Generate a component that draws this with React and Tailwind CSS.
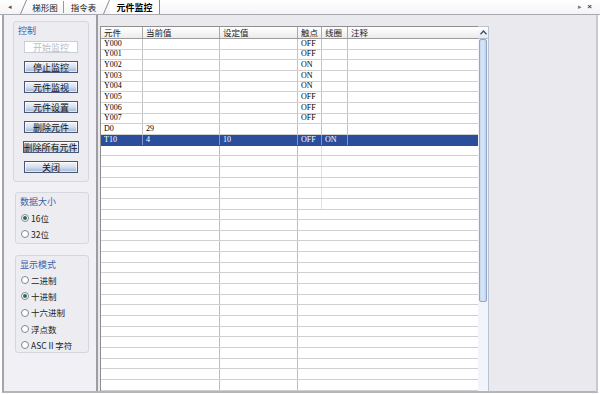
import React from "react";

const FONT = { fontFamily: '"Liberation Serif", "Noto Sans CJK SC", serif' };
const CJK = { fontFamily: '"Noto Sans CJK SC", "Liberation Sans", sans-serif' };

const cols = [
  { w: 42, label: "元件" },
  { w: 77, label: "当前值" },
  { w: 78, label: "设定值" },
  { w: 24, label: "触点" },
  { w: 26, label: "线圈" },
  { w: 130, label: "注释" },
];

const data = [
  ["Y000", "", "", "OFF", "", ""],
  ["Y001", "", "", "OFF", "", ""],
  ["Y002", "", "", "ON", "", ""],
  ["Y003", "", "", "ON", "", ""],
  ["Y004", "", "", "ON", "", ""],
  ["Y005", "", "", "OFF", "", ""],
  ["Y006", "", "", "OFF", "", ""],
  ["Y007", "", "", "OFF", "", ""],
  ["D0", "29", "", "", "", ""],
  ["T10", "4", "10", "OFF", "ON", ""],
];

function Btn({ children, disabled, wide }) {
  return (
    <div
      className={
        "flex items-center justify-center h-[12px] text-[9px] leading-none " +
        (wide ? "w-[56px] -ml-[1px] " : "w-[54px] ") +
        (disabled
          ? "bg-white border border-[#c9cdd6] text-[#b8bcc6]"
          : "bg-gradient-to-b from-[#f3f6fb] via-[#d5dfee] to-[#9fb3d2] border border-[#4a5877] text-[#111] shadow-[inset_0_0_0_1px_#ffffffaa]")
      }
      style={CJK}
    >
      {children}
    </div>
  );
}

function Radio({ checked, children }) {
  return (
    <div className="flex items-center gap-[2px] h-[10px]">
      <div className="w-[8px] h-[8px] rounded-full border border-[#7b8894] bg-white flex items-center justify-center">
        {checked && <div className="w-[4px] h-[4px] rounded-full bg-[#2f6b55]" />}
      </div>
      <span className="text-[8.5px] leading-none text-[#222]" style={CJK}>
        {children}
      </span>
    </div>
  );
}

function Group({ title, children, className }) {
  return (
    <div
      className={
        "rounded-[3px] border border-[#d6d6de] bg-[#ededf1] " + (className || "")
      }
    >
      <div className="text-[9px] leading-none text-[#3e5ea6] pl-[4px] pt-[4px]" style={CJK}>
        {title}
      </div>
      {children}
    </div>
  );
}

function Slant() {
  return (
    <svg width="7" height="15" viewBox="0 0 7 15" className="shrink-0">
      <line x1="0.5" y1="15" x2="6.5" y2="1" stroke="#8c8c8c" strokeWidth="1" />
    </svg>
  );
}

export default function App() {
  const emptyRows = Array.from({ length: 24 });
  return (
    <div className="w-[600px] h-[394px] overflow-hidden bg-white flex flex-col" style={FONT}>
      {/* Tab bar */}
      <div className="h-[15px] shrink-0 flex items-end bg-gradient-to-b from-white to-[#f4f4f6] border-b border-[#a9a9b0]">
        <div className="w-[20px] h-[14px] flex items-center justify-center text-[7px] text-[#555]">◂</div>
        <Slant />
        <div className="w-[36px] h-[14px] flex items-center justify-center text-[8.5px] leading-none text-[#222]" style={CJK}>
          梯形图
        </div>
        <div className="w-[1px] h-[12px] bg-[#9a9a9a] mb-[1px]" />
        <div className="w-[39px] h-[14px] flex items-center justify-center text-[8.5px] leading-none text-[#222]" style={CJK}>
          指令表
        </div>
        <Slant />
        <div className="w-[50px] h-[14px] flex items-center justify-center bg-white border-r border-[#8c8c8c] text-[9px] font-bold leading-none text-black" style={CJK}>
          元件监控
        </div>
        <div className="ml-auto flex items-center gap-[5px] pr-[8px] h-[14px] text-[8px] text-[#444]">
          <span className="text-[7px] text-[#777]">▸</span>
          <span className="font-bold" style={{ fontFamily: '"Liberation Sans", sans-serif' }}>×</span>
        </div>
      </div>

      {/* Body */}
      <div className="flex-1 min-h-0 overflow-hidden flex bg-[#eae9ee] border-l-[2px] border-r-[2px] border-b-[2px] border-l-[#a4a4aa] border-r-[#c9c9cf] border-b-[#b4b4ba] ml-[2px] mr-[2px] mb-[1px]">
        {/* Left panel */}
        <div className="w-[94px] bg-[#f1f0f4] border-r-[2px] border-[#9d9da3] pl-[9px] pr-[7px] pt-[6px] flex flex-col">
          <Group title="控制" className="h-[161px]">
            <div className="flex flex-col items-center gap-[8px] pt-[6px]">
              <Btn disabled>开始监控</Btn>
              <Btn>停止监控</Btn>
              <Btn>元件监视</Btn>
              <Btn>元件设置</Btn>
              <Btn>删除元件</Btn>
              <Btn wide>删除所有元件</Btn>
              <Btn>关闭</Btn>
            </div>
          </Group>
          <Group title="数据大小" className="h-[52px] mt-[10px] ml-[2px]">
            <div className="flex flex-col gap-[6px] pl-[5px] pt-[7px]">
              <Radio checked>16位</Radio>
              <Radio>32位</Radio>
            </div>
          </Group>
          <Group title="显示模式" className="h-[98px] mt-[11px] ml-[2px]">
            <div className="flex flex-col gap-[6.3px] pl-[5px] pt-[6px]">
              <Radio>二进制</Radio>
              <Radio checked>十进制</Radio>
              <Radio>十六进制</Radio>
              <Radio>浮点数</Radio>
              <Radio>ASCⅡ字符</Radio>
            </div>
          </Group>
        </div>

        {/* Table area */}
        <div className="pt-[11px] pl-[2px] flex">
          <div className="w-[378px] bg-white border-l border-t border-[#8f8f8f] flex flex-col overflow-hidden">
            {/* header */}
            <div className="flex shrink-0 h-[12px] bg-gradient-to-b from-white to-[#ececec] border-b border-[#9c9c9c]">
              {cols.map((c, i) => (
                <div
                  key={i}
                  className={
                    "h-full flex items-center pl-[3px] text-[8.5px] leading-none text-[#222] " +
                    (i < cols.length - 1 ? "border-r border-[#a9a9a9]" : "")
                  }
                  style={{ width: c.w, ...CJK }}
                >
                  {c.label}
                </div>
              ))}
            </div>
            {data.map((r, ri) => {
              const sel = ri === data.length - 1;
              return (
                <div
                  key={ri}
                  className={
                    "flex shrink-0 h-[10.67px] border-b " +
                    (sel ? "bg-[#2a4e9c] border-[#2a4e9c] text-white" : "border-[#d0d0d0] text-black")
                  }
                >
                  {cols.map((c, i) => (
                    <div
                      key={i}
                      className={
                        "h-full flex items-center pl-[3px] text-[8px] leading-none " +
                        (i < cols.length - 1
                          ? sel
                            ? "border-r border-[#7f95c6]"
                            : "border-r border-[#c4c4c4]"
                          : "")
                      }
                      style={{ width: c.w }}
                    >
                      {r[i]}
                    </div>
                  ))}
                </div>
              );
            })}
            {emptyRows.map((_, ri) => (
              <div key={ri} className="flex shrink-0 h-[10.67px] border-b border-[#d0d0d0]">
                {cols.map((c, i) => (
                  <div
                    key={i}
                    className={
                      "h-full " +
                      (i === 1 || i === 2
                        ? "border-r border-[#bdbdbd]"
                        : i === 3 && ri < 6
                        ? "border-r border-[#e2e2e2]"
                        : "")
                    }
                    style={{ width: c.w }}
                  />
                ))}
              </div>
            ))}
          </div>
          {/* scrollbar */}
          <div className="w-[11px] bg-[#f1f5fb] border-t border-r border-[#b9c3d2] flex flex-col">
            <div className="h-[12px] flex items-center justify-center bg-gradient-to-b from-white to-[#e4e9f1] border-b border-[#b3bfd0]">
              <svg width="7" height="5" viewBox="0 0 7 5">
                <path d="M0.5 4.2 L3.5 1 L6.5 4.2" fill="none" stroke="#3d4d66" strokeWidth="1.3" />
              </svg>
            </div>
            <div className="h-[263px] mx-[1px] rounded-[2px] bg-gradient-to-r from-[#c7d8ee] via-[#dbe7f6] to-[#bcd0ea] border border-[#8fa8c9]" />
          </div>
        </div>
        <div className="flex-1" />
      </div>
    </div>
  );
}
